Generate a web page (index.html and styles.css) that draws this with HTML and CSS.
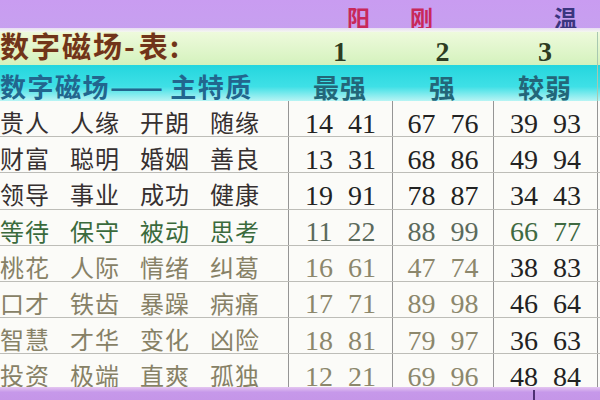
FILE: index.html
```html
<!DOCTYPE html>
<html lang="zh-CN">
<head>
<meta charset="utf-8">
<title>数字磁场表</title>
<link rel="stylesheet" href="styles.css">
</head>
<body>
<div class="page">
  <div class="grid topbar">
    <div class="c"></div>
    <div class="c tb tb1"><span class="red">阳</span></div>
    <div class="c tb tb2"><span class="red">刚</span></div>
    <div class="c tb tb3"><span class="navy">温</span></div>
    <div class="c"></div>
  </div>
  <div class="sep"></div>
  <div class="grid title">
    <div class="c title-text">数字磁场<span class="dash">-</span>表:</div>
    <div class="c hnum">1</div>
    <div class="c hnum">2</div>
    <div class="c hnum">3</div>
    <div class="c edge"></div>
  </div>
  <div class="grid head">
    <div class="c head-text">数字磁场<span class="dashes">——</span>主特质</div>
    <div class="c hcol">最强</div>
    <div class="c hcol">强</div>
    <div class="c hcol">较弱</div>
    <div class="c edge"></div>
  </div>

  <div class="grid row g1">
    <div class="c words"><span>贵人</span><span>人缘</span><span>开朗</span><span>随缘</span></div>
    <div class="c num"><span>14</span><span>41</span></div>
    <div class="c num"><span>67</span><span>76</span></div>
    <div class="c num n3"><span>39</span><span>93</span></div>
    <div class="c"></div>
  </div>
  <div class="grid row g1">
    <div class="c words"><span>财富</span><span>聪明</span><span>婚姻</span><span>善良</span></div>
    <div class="c num"><span>13</span><span>31</span></div>
    <div class="c num"><span>68</span><span>86</span></div>
    <div class="c num n3"><span>49</span><span>94</span></div>
    <div class="c"></div>
  </div>
  <div class="grid row g1">
    <div class="c words"><span>领导</span><span>事业</span><span>成功</span><span>健康</span></div>
    <div class="c num"><span>19</span><span>91</span></div>
    <div class="c num"><span>78</span><span>87</span></div>
    <div class="c num n3"><span>34</span><span>43</span></div>
    <div class="c"></div>
  </div>
  <div class="grid row g2">
    <div class="c words"><span>等待</span><span>保守</span><span>被动</span><span>思考</span></div>
    <div class="c num"><span>11</span><span>22</span></div>
    <div class="c num"><span>88</span><span>99</span></div>
    <div class="c num n3"><span>66</span><span>77</span></div>
    <div class="c"></div>
  </div>
  <div class="grid row g3">
    <div class="c words"><span>桃花</span><span>人际</span><span>情绪</span><span>纠葛</span></div>
    <div class="c num"><span>16</span><span>61</span></div>
    <div class="c num"><span>47</span><span>74</span></div>
    <div class="c num n3"><span>38</span><span>83</span></div>
    <div class="c"></div>
  </div>
  <div class="grid row g3">
    <div class="c words"><span>口才</span><span>铁齿</span><span>暴躁</span><span>病痛</span></div>
    <div class="c num"><span>17</span><span>71</span></div>
    <div class="c num"><span>89</span><span>98</span></div>
    <div class="c num n3"><span>46</span><span>64</span></div>
    <div class="c"></div>
  </div>
  <div class="grid row g3">
    <div class="c words"><span>智慧</span><span>才华</span><span>变化</span><span>凶险</span></div>
    <div class="c num"><span>18</span><span>81</span></div>
    <div class="c num"><span>79</span><span>97</span></div>
    <div class="c num n3"><span>36</span><span>63</span></div>
    <div class="c"></div>
  </div>
  <div class="grid row g3 last">
    <div class="c words"><span>投资</span><span>极端</span><span>直爽</span><span>孤独</span></div>
    <div class="c num"><span>12</span><span>21</span></div>
    <div class="c num"><span>69</span><span>96</span></div>
    <div class="c num n3"><span>48</span><span>84</span></div>
    <div class="c"></div>
  </div>
  <div class="bottombar"><span class="tick"></span></div>
</div>
</body>
</html>
```

FILE: styles.css
```css
html, body {
  margin: 0;
  padding: 0;
  width: 600px;
  height: 400px;
  overflow: hidden;
  background: #fbfbf8;
}

.page {
  width: 600px;
  height: 400px;
  display: flex;
  flex-direction: column;
  overflow: hidden;
  font-family: "Noto Sans CJK SC", "Noto Sans", sans-serif;
}

.grid {
  display: grid;
  grid-template-columns: 288px 104px 101px 104px 3px;
  grid-template-rows: 100%;
  flex: none;
  box-sizing: border-box;
}

.c {
  box-sizing: border-box;
  white-space: nowrap;
  min-width: 0;
}

/* top purple bar */
.topbar {
  height: 28px;
  background: linear-gradient(#c99cf1, #c7a0ef);
}
.tb {
  font-size: 23px;
  line-height: 34px;
  font-weight: 700;
}
.tb1 { padding-left: 59px; }
.tb2 { padding-left: 18px; }
.tb3 { padding-left: 61px; }
.red { color: #c8285a; }
.navy { color: #3b357e; }

.sep {
  height: 4px;
  flex: none;
  background: linear-gradient(#e8dcf4, #f4f8ee);
}

/* yellow-green title band */
.title {
  height: 33px;
  background: linear-gradient(#eefadc, #d4f2bd);
}
.title-text {
  font-size: 29px;
  line-height: 29px;
  font-weight: 700;
  letter-spacing: 2px;
  color: #70341a;
  text-shadow: 0 0 2px #f6e7a0;
  margin-top: -1px;
}
.title-text .dash {
  letter-spacing: 4px;
}
.hnum {
  font-family: "Liberation Serif", serif;
  font-weight: 700;
  font-size: 28px;
  line-height: 28px;
  padding-top: 6px;
  text-align: center;
  color: #2d3c22;
}
.edge { border-left: 1px solid #a8c8b0; }

/* cyan head band */
.head {
  height: 36px;
  background: linear-gradient(#24d6de, #3fe0e6 60%, #b9f4f4);
}
.head-text {
  font-size: 26px;
  line-height: 26px;
  font-weight: 700;
  color: #22668e;
  padding-top: 8px;
  letter-spacing: 1.5px;
}
.head-text .dashes {
  letter-spacing: 0;
  display: inline-block;
  transform: scaleX(1.2);
  transform-origin: left center;
  margin: 0 16px 0 0;
}
.hcol {
  font-size: 26px;
  line-height: 26px;
  font-weight: 700;
  color: #236679;
  padding-top: 9px;
  text-align: center;
  letter-spacing: 1px;
}

/* data rows */
.row {
  height: 36.2px;
  background: #fbfbf8;
  border-bottom: 1px solid #bdbdb8;
}
.row.last {
  height: 32.6px;
  border-bottom: 0;
}
.row .c + .c {
  border-left: 1px solid #959595;
}
.words {
  display: flex;
  gap: 20px;
  font-size: 24px;
  line-height: 24px;
  letter-spacing: 1px;
  padding-top: 9px;
}
.num {
  display: flex;
  justify-content: center;
  gap: 15px;
  font-family: "Liberation Serif", serif;
  font-size: 28px;
  line-height: 28px;
  padding-top: 8.5px;
}

.g1 .words { color: #363030; }
.g1 .num { color: #222222; }
.g2 .words { color: #3a6a3c; }
.g2 .num { color: #5b6a5c; }
.g2 .num.n3 { color: #3f6a42; }
.g3 .words { color: #878166; }
.g3 .num { color: #8c876c; }
.g3 .num.n3 { color: #222222; }

/* bottom purple bar */
.bottombar {
  flex: 1;
  position: relative;
  background: linear-gradient(#e4c6f0, #c698ea 40%, #c596e8);
}
.tick {
  position: absolute;
  left: 533px;
  top: 3px;
  width: 2px;
  height: 12px;
  background: #4e2f72;
}
```
